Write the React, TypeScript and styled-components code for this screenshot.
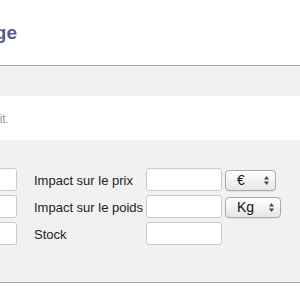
import React from "react";
import styled, { createGlobalStyle } from "styled-components";

const GlobalStyle = createGlobalStyle`
  html, body {
    margin: 0;
    padding: 0;
    background: #fff;
    overflow: hidden;
  }
  body {
    font-family: "Liberation Sans", Arial, sans-serif;
  }
`;

const Page = styled.div`
  width: 300px;
  height: 300px;
  overflow: hidden;
  display: flex;
  flex-direction: column;
`;

const Header = styled.div`
  height: 65px;
  border-bottom: 1px solid #a9a9a9;
  display: flex;
  align-items: flex-start;
`;

const Title = styled.h1`
  margin: 22px 0 0 -283px;
  width: 300px;
  text-align: right;
  font-size: 19px;
  font-weight: 700;
  color: #555a8a;
  white-space: nowrap;
`;

const Toolbar = styled.div`
  height: 30px;
  background: #f1f1f1;
`;

const Notice = styled.div`
  height: 44px;
  display: flex;
  align-items: center;
`;

const NoticeText = styled.p`
  margin: 0 0 0 -391px;
  width: 400px;
  text-align: right;
  font-size: 12px;
  color: #8c9bb1;
  white-space: nowrap;
  padding-top: 1px;
`;

const FormPanel = styled.div`
  height: 143px;
  box-sizing: border-box;
  background: #f1f1f1;
  border-bottom: 1px solid #a4a4a4;
  padding-top: 28px;
  display: flex;
  flex-direction: column;
  gap: 4px;
`;

const Row = styled.div`
  display: flex;
  align-items: center;
  height: 23px;
`;

const Input = styled.div<{ $width: number; $offset?: number }>`
  width: ${(p) => p.$width}px;
  height: 23px;
  box-sizing: border-box;
  margin-left: ${(p) => p.$offset ?? 0}px;
  background: #fff;
  border: 1px solid #cbcbcb;
  border-radius: 3px;
  flex-shrink: 0;
`;

const Label = styled.span`
  width: 112px;
  margin-left: 17px;
  font-size: 13px;
  color: #222;
  flex-shrink: 0;
  padding-top: 1px;
`;

const Select = styled.div<{ $width: number }>`
  width: ${(p) => p.$width}px;
  height: 21px;
  box-sizing: border-box;
  margin-left: 3px;
  margin-top: 1px;
  border: 1px solid #a9a9a9;
  border-radius: 4px;
  background: linear-gradient(#ffffff, #f3f3f3 50%, #e6e6e6);
  box-shadow: 0 1px 0 rgba(0, 0, 0, 0.06);
  display: flex;
  align-items: center;
  justify-content: space-between;
  padding: 0 6px 0 11px;
  font-size: 14px;
  color: #111;
  flex-shrink: 0;
`;

const Arrows = () => (
  <svg width="5" height="9" viewBox="0 0 5 9">
    <path d="M2.5 0 L5 3.4 L0 3.4 Z" fill="#444" />
    <path d="M2.5 9 L5 5.6 L0 5.6 Z" fill="#444" />
  </svg>
);

export default function App() {
  return (
    <Page>
      <GlobalStyle />
      <Header>
        <Title>Gestion du stockage</Title>
      </Header>
      <Toolbar />
      <Notice>
        <NoticeText>Ajoutez ou modifiez les déclinaisons de ce produit.</NoticeText>
      </Notice>
      <FormPanel>
        <Row>
          <Input $width={77} $offset={-60} />
          <Label>Impact sur le prix</Label>
          <Input $width={76} />
          <Select $width={51}>
            €<Arrows />
          </Select>
        </Row>
        <Row>
          <Input $width={77} $offset={-60} />
          <Label>Impact sur le poids</Label>
          <Input $width={76} />
          <Select $width={56}>
            Kg<Arrows />
          </Select>
        </Row>
        <Row>
          <Input $width={77} $offset={-60} />
          <Label>Stock</Label>
          <Input $width={76} />
        </Row>
      </FormPanel>
    </Page>
  );
}
